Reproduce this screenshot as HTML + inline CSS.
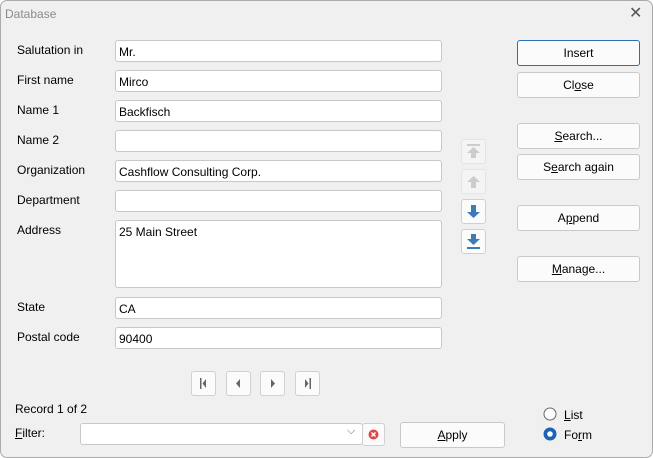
<!DOCTYPE html><html><head><style>
body{margin:0;width:653px;height:458px;background:#fff;font-family:"Liberation Sans",sans-serif;font-size:12px;color:#000;overflow:hidden}
.win{position:absolute;left:0;top:0;width:651px;height:456px;border:1px solid #aaa;border-radius:7px;background:#f0f0f0;overflow:hidden}
.w{position:absolute;left:-1px;top:-1px}
.t{position:absolute;white-space:nowrap}
.in{position:absolute;left:115px;width:325px;height:20px;background:#fff;border:1px solid #c8c8c8;border-radius:3px;box-sizing:content-box}
.in span{position:absolute;left:3px;top:4px}
.b{position:absolute;left:517px;width:121px;height:24px;background:#fbfbfb;border:1px solid #c9c9c9;border-radius:3px;text-align:center;line-height:24px}
.sb{position:absolute;width:23px;height:23px;background:#fbfbfb;border:1px solid #d0d0d0;border-radius:3px}
.dis{background:#f4f4f4;border-color:#e4e4e4}
u{text-decoration:underline}
</style></head><body><div class="win"><div class="w">
<div class="t" style="left:5px;top:7px;color:#8a8a8a">Database</div>
<div class="t" style="left:629px;top:3px;font-size:16px;color:#555">✕</div>
<div class="t" style="left:17px;top:43px">Salutation in</div>
<div class="t" style="left:17px;top:73px">First name</div>
<div class="t" style="left:17px;top:103px">Name 1</div>
<div class="t" style="left:17px;top:133px">Name 2</div>
<div class="t" style="left:17px;top:163px">Organization</div>
<div class="t" style="left:17px;top:193px">Department</div>
<div class="t" style="left:17px;top:223px">Address</div>
<div class="t" style="left:17px;top:300px">State</div>
<div class="t" style="left:17px;top:330px">Postal code</div>
<div class="in" style="top:40px"><span>Mr.</span></div>
<div class="in" style="top:70px"><span>Mirco</span></div>
<div class="in" style="top:100px"><span>Backfisch</span></div>
<div class="in" style="top:130px"></div>
<div class="in" style="top:160px"><span>Cashflow Consulting Corp.</span></div>
<div class="in" style="top:190px"></div>
<div class="in" style="top:220px;height:66px"><span>25 Main Street</span></div>
<div class="in" style="top:297px"><span>CA</span></div>
<div class="in" style="top:327px"><span>90400</span></div>
<div class="b" style="top:40px;border-color:#2a6fb5">Insert</div>
<div class="b" style="top:72px">Cl<u>o</u>se</div>
<div class="b" style="top:123px"><u>S</u>earch...</div>
<div class="b" style="top:154px">S<u>e</u>arch again</div>
<div class="b" style="top:205px">A<u>p</u>pend</div>
<div class="b" style="top:256px"><u>M</u>anage...</div>
<div class="sb dis" style="left:461px;top:139px"><svg width="23" height="23"><rect x="5" y="4" width="13" height="2" fill="#ccc"/><path d="M11.5 7L5 13H9V18H14V13H18Z" fill="#ccc"/></svg></div>
<div class="sb dis" style="left:461px;top:169px"><svg width="23" height="23"><path d="M11.5 6L5 12H9V18H14V12H18Z" fill="#ccc"/></svg></div>
<div class="sb" style="left:461px;top:199px"><svg width="23" height="23"><path d="M11.5 18L5 12H9V5H14V12H18Z" fill="#3d7ab8"/></svg></div>
<div class="sb" style="left:461px;top:229px"><svg width="23" height="23"><path d="M11.5 15L5 9H9V4H14V9H18Z" fill="#3d7ab8"/><rect x="5" y="17" width="13" height="2" fill="#3d7ab8"/></svg></div>
<div class="sb" style="left:191px;top:371px"><svg width="23" height="23"><rect x="8" y="6" width="1.5" height="11" fill="#666"/><path d="M10.5 11.5L14 7V16Z" fill="#666"/></svg></div>
<div class="sb" style="left:226px;top:371px"><svg width="23" height="23"><path d="M9 11.5L13 7V16Z" fill="#666"/></svg></div>
<div class="sb" style="left:260px;top:371px"><svg width="23" height="23"><path d="M14 11.5L10 7V16Z" fill="#666"/></svg></div>
<div class="sb" style="left:295px;top:371px"><svg width="23" height="23"><path d="M12.5 11.5L9 7V16Z" fill="#666"/><rect x="13.5" y="6" width="1.5" height="11" fill="#666"/></svg></div>
<div class="t" style="left:15px;top:402px">Record 1 of 2</div>
<div class="t" style="left:15px;top:426px"><u>F</u>ilter:</div>
<div class="in" style="left:80px;top:423px;width:281px"><span style="left:266px;top:1px;color:#666;font-size:11px">⌵</span></div>
<div class="sb" style="left:362px;top:423px;width:21px;height:21px"><svg width="21" height="21"><circle cx="10.5" cy="10.5" r="5" fill="#e04848"/><path d="M8.5 8.5L12.5 12.5M12.5 8.5L8.5 12.5" stroke="#fff" stroke-width="1.5"/></svg></div>
<div class="b" style="left:400px;top:422px;width:103px"><u>A</u>pply</div>
<svg class="t" style="left:543px;top:407px" width="14" height="14"><circle cx="7" cy="7" r="6" fill="#fff" stroke="#666"/></svg>
<div class="t" style="left:564px;top:408px"><u>L</u>ist</div>
<svg class="t" style="left:543px;top:427px" width="14" height="14"><circle cx="7" cy="7" r="6.5" fill="#1a63b5"/><circle cx="7" cy="7" r="2.8" fill="#fff"/></svg>
<div class="t" style="left:564px;top:428px">Fo<u>r</u>m</div>
</div></div></body></html>
